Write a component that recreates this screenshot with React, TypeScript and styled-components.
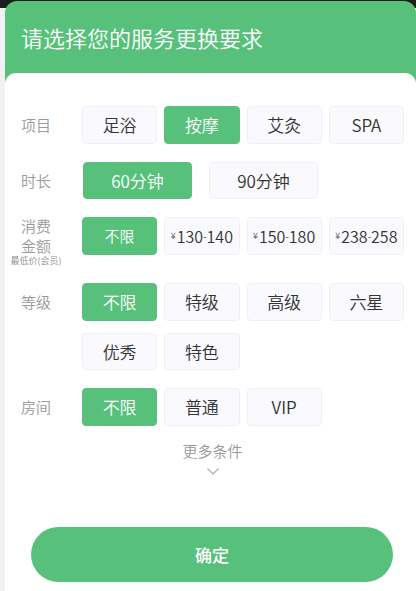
import React, { useState } from 'react';
import styled, { createGlobalStyle } from 'styled-components';

const GREEN = '#57c17b';

const GlobalStyle = createGlobalStyle`
  html, body {
    margin: 0;
    padding: 0;
    height: 100%;
  }
  body {
    font-family: "Noto Sans CJK SC", "Noto Sans", sans-serif;
    font-weight: 350;
    background: linear-gradient(to bottom, #1b1f1c 0, #1b1f1c 8px, #f2f2f2 8px);
  }
`;

const Page = styled.div`
  height: 591px;
  padding: 1px 0 0 5px;
  box-sizing: border-box;
  display: flex;
`;

const Card = styled.div`
  flex: 1;
  display: flex;
  flex-direction: column;
  background: ${GREEN};
  border-radius: 12px 12px 0 0;
  overflow: hidden;
`;

const Header = styled.div`
  height: 72px;
  display: flex;
  align-items: center;
  padding-left: 16px;
  box-sizing: border-box;
  color: #fff;
  font-size: 22px;
`;

const Panel = styled.div`
  flex: 1;
  background: #fff;
  border-radius: 11px 11px 0 0;
  padding: 33px 12px 0 16px;
  display: flex;
  flex-direction: column;
`;

const Rows = styled.div`
  display: flex;
  flex-direction: column;
  gap: 18px;
`;

const Row = styled.div<{ $top?: boolean }>`
  display: flex;
  align-items: ${p => (p.$top ? 'flex-start' : 'center')};
`;

const Label = styled.div<{ $tall?: boolean }>`
  width: 61px;
  flex-shrink: 0;
  font-size: 15px;
  line-height: ${p => (p.$tall ? '37.5px' : 'normal')};
  color: #9a9a9a;
`;

const PriceLabel = styled.div`
  width: 30px;
  margin-right: 31px;
  margin-top: -1px;
  flex-shrink: 0;
  display: flex;
  flex-direction: column;
  align-items: center;
  color: #9a9a9a;
`;

const PriceMain = styled.div`
  font-size: 15px;
  line-height: 20px;
  text-align: center;
`;

const PriceHint = styled.div`
  font-size: 9px;
  line-height: 9px;
  white-space: nowrap;
  color: #8a8a8a;
`;

const Grid = styled.div`
  flex: 1;
  display: grid;
  grid-template-columns: repeat(4, 1fr);
  column-gap: 7px;
  row-gap: 12px;
`;

const Pair = styled.div`
  display: flex;
  gap: 17px;
  padding-left: 1px;
`;

const Option = styled.button<{ $active?: boolean; $size?: number; $wide?: boolean }>`
  height: 37.5px;
  width: ${p => (p.$wide ? '109px' : 'auto')};
  box-sizing: border-box;
  border-radius: 4px;
  border: 1px solid ${p => (p.$active ? GREEN : '#efeff8')};
  background: ${p => (p.$active ? GREEN : '#f9f9fe')};
  color: ${p => (p.$active ? '#fff' : '#333')};
  font-family: inherit;
  font-weight: 350;
  font-size: ${p => p.$size ?? 17}px;
  padding: 0;
  display: flex;
  align-items: center;
  justify-content: center;
  cursor: pointer;
`;

const Yen = styled.span`
  font-size: 9px;
  margin-right: 1px;
  color: #555;
`;

const Dash = styled.span`
  font-size: 10px;
  vertical-align: 4px;
`;

const More = styled.div`
  margin-top: 15px;
  display: flex;
  flex-direction: column;
  align-items: center;
  color: #999;
  font-size: 15px;
  line-height: 20px;
  gap: 7px;
`;

const Confirm = styled.button`
  margin: 52.5px 11px 0 10px;
  height: 55px;
  border: none;
  border-radius: 28px;
  background: ${GREEN};
  color: #fff;
  font-family: inherit;
  font-size: 17px;
  font-weight: 500;
  cursor: pointer;
`;

const Chevron = () => (
  <svg width="12" height="7" viewBox="0 0 12 7" fill="none">
    <path d="M0.5 0.5 L6 6 L11.5 0.5" stroke="#aaa" strokeWidth="1.1" />
  </svg>
);

const Price = ({ from, to }: { from: string; to: string }) => (
  <>
    <Yen>¥</Yen>
    {from}
    <Dash>-</Dash>
    {to}
  </>
);

export default function App() {
  const [item, setItem] = useState('按摩');
  const [time, setTime] = useState('60分钟');
  const [price, setPrice] = useState('不限');
  const [level, setLevel] = useState('不限');
  const [room, setRoom] = useState('不限');

  const items = ['足浴', '按摩', '艾灸', 'SPA'];
  const times = ['60分钟', '90分钟'];
  const prices: [string, string][] = [['130', '140'], ['150', '180'], ['238', '258']];
  const levels = ['不限', '特级', '高级', '六星', '优秀', '特色'];
  const rooms = ['不限', '普通', 'VIP'];

  return (
    <>
      <GlobalStyle />
      <Page>
        <Card>
          <Header>请选择您的服务更换要求</Header>
          <Panel>
            <Rows>
              <Row>
                <Label>项目</Label>
                <Grid>
                  {items.map(v => (
                    <Option key={v} $active={item === v} onClick={() => setItem(v)}>{v}</Option>
                  ))}
                </Grid>
              </Row>
              <Row>
                <Label>时长</Label>
                <Pair>
                  {times.map(v => (
                    <Option key={v} $wide $active={time === v} onClick={() => setTime(v)}>{v}</Option>
                  ))}
                </Pair>
              </Row>
              <Row $top>
                <PriceLabel>
                  <PriceMain>消费金额</PriceMain>
                  <PriceHint>最低价(会员)</PriceHint>
                </PriceLabel>
                <Grid>
                  <Option $size={15} $active={price === '不限'} onClick={() => setPrice('不限')}>不限</Option>
                  {prices.map(([a, b]) => (
                    <Option key={a} $size={16} $active={price === a} onClick={() => setPrice(a)}>
                      <Price from={a} to={b} />
                    </Option>
                  ))}
                </Grid>
              </Row>
              <Row $top>
                <Label $tall>等级</Label>
                <Grid>
                  {levels.map(v => (
                    <Option key={v} $active={level === v} onClick={() => setLevel(v)}>{v}</Option>
                  ))}
                </Grid>
              </Row>
              <Row>
                <Label>房间</Label>
                <Grid>
                  {rooms.map(v => (
                    <Option key={v} $active={room === v} onClick={() => setRoom(v)}>{v}</Option>
                  ))}
                </Grid>
              </Row>
            </Rows>
            <More>
              更多条件
              <Chevron />
            </More>
            <Confirm>确定</Confirm>
          </Panel>
        </Card>
      </Page>
    </>
  );
}
